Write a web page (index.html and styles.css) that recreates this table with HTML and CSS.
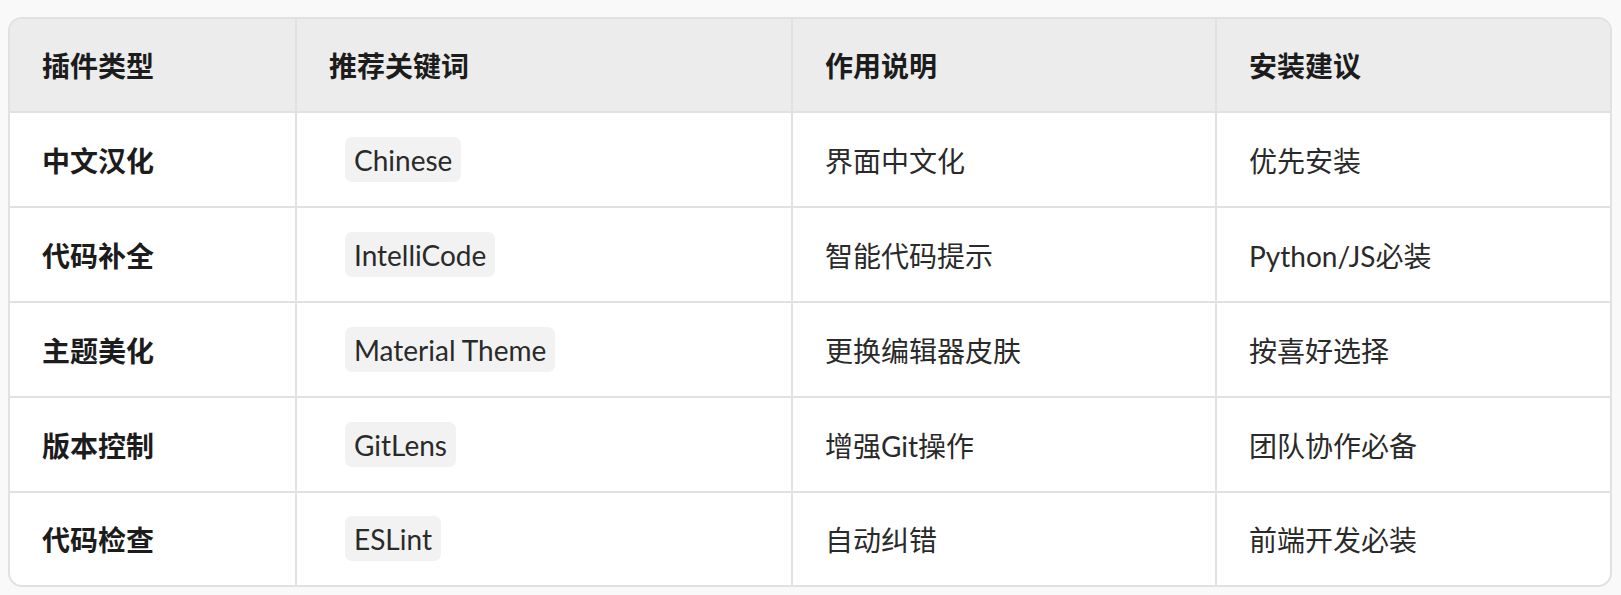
FILE: index.html
```html
<!DOCTYPE html>
<html lang="zh-CN">
<head>
<meta charset="utf-8">
<title>插件推荐</title>
<link rel="stylesheet" href="styles.css">
</head>
<body>
<div class="table">
  <div class="row head">
    <div class="cell">插件类型</div>
    <div class="cell">推荐关键词</div>
    <div class="cell">作用说明</div>
    <div class="cell">安装建议</div>
  </div>
  <div class="row">
    <div class="cell strong">中文汉化</div>
    <div class="cell"><code class="chip">Chinese</code></div>
    <div class="cell">界面中文化</div>
    <div class="cell">优先安装</div>
  </div>
  <div class="row">
    <div class="cell strong">代码补全</div>
    <div class="cell"><code class="chip">IntelliCode</code></div>
    <div class="cell">智能代码提示</div>
    <div class="cell">Python/JS必装</div>
  </div>
  <div class="row">
    <div class="cell strong">主题美化</div>
    <div class="cell"><code class="chip">Material Theme</code></div>
    <div class="cell">更换编辑器皮肤</div>
    <div class="cell">按喜好选择</div>
  </div>
  <div class="row">
    <div class="cell strong">版本控制</div>
    <div class="cell"><code class="chip">GitLens</code></div>
    <div class="cell">增强Git操作</div>
    <div class="cell">团队协作必备</div>
  </div>
  <div class="row last">
    <div class="cell strong">代码检查</div>
    <div class="cell"><code class="chip">ESLint</code></div>
    <div class="cell">自动纠错</div>
    <div class="cell">前端开发必装</div>
  </div>
</div>
</body>
</html>
```

FILE: styles.css
```css
* { box-sizing: border-box; }

html, body {
  margin: 0;
  background: #f9f9f9;
}

body {
  padding: 17px 9px 0 8px;
  font-family: "Lato", "Noto Sans CJK SC", sans-serif;
  font-size: 28px;
  color: #2a2a2a;
}

.table {
  width: 1604px;
  background: #ffffff;
  border: 2px solid #e1e1e1;
  border-radius: 14px;
  overflow: hidden;
}

.row {
  display: grid;
  grid-template-columns: 287px 496px 424px 1fr;
  height: 95px;
  border-bottom: 2px solid #e1e1e1;
}

.row.head {
  height: 94px;
  background: #ececec;
}

.row.last {
  height: 92px;
  border-bottom: none;
}

.cell {
  display: flex;
  align-items: center;
  padding: 0 31px 0 32px;
  border-right: 2px solid #e1e1e1;
  white-space: nowrap;
}

.cell:last-child { border-right: none; }

.head .cell,
.cell.strong {
  font-weight: 700;
  color: #1c1c1c;
}

.chip {
  font-family: "Lato", "Noto Sans CJK SC", sans-serif;
  font-size: 28px;
  display: inline-block;
  height: 45px;
  line-height: 43px;
  padding: 2px 9px 0;
  margin-left: 16px;
  margin-top: -1px;
  background: #f2f2f2;
  border-radius: 7px;
  color: #2a2a2a;
}
```
